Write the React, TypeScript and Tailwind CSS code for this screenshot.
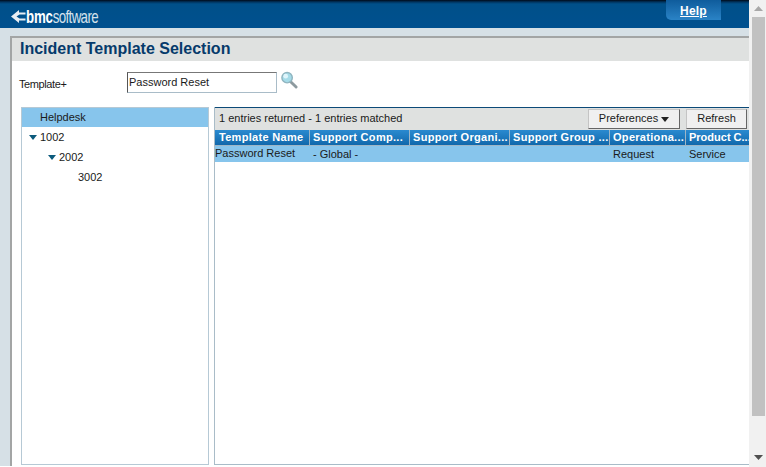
import React from "react";

const columns = [
  { label: "Template Name", width: "w-[95px]", value: "Password Reset", cell: "pl-0 -translate-y-px" },
  { label: "Support Comp...", width: "w-[100px]", value: "- Global -", cell: "pl-[3px]" },
  { label: "Support Organi...", width: "w-[100px]", value: "", cell: "pl-[3px]" },
  { label: "Support Group ...", width: "w-[100px]", value: "", cell: "pl-[3px]" },
  { label: "Operationa...", width: "w-[76px]", value: "Request", cell: "pl-[3px]" },
  { label: "Product C...", width: "w-[63px]", value: "Service", cell: "pl-[3px]" },
];

const Caret = ({ className }: { className: string }) => (
  <svg width="8" height="5" viewBox="0 0 8 5" className={className}>
    <path d="M0 0h8L4 5z" fill="currentColor" />
  </svg>
);

const App: React.FC = () => {
  return (
    <div className="flex h-[467px] w-[766px] overflow-hidden bg-[#d6e0e6] font-['Liberation_Sans',Arial,sans-serif] text-[11px] text-[#1a1a1a]">
      <div className="flex w-[749px] flex-col">
        {/* top banner */}
        <div className="flex h-[28px] shrink-0 items-start justify-between bg-[linear-gradient(#000a18_0px,#00345f_2px,#005089_4px,#00508f_100%)]">
          <div className="ml-[11px] mt-[5px] flex h-[23px] items-center text-white">
            <svg width="15" height="15" viewBox="0 0 15 15" className="shrink-0">
              <path d="M8 1 0 7.500 8 14v-2.500h6.500v-2H8.500L5.500 7.500l3-2h6v-2H8z" fill="#e8eef4" />
            </svg>
            <span className="origin-left scale-x-[0.7] whitespace-nowrap text-[19px] leading-none">
              <span className="font-bold tracking-[-0.3px]">bmc</span>
              <span className="tracking-[-0.9px] text-[#d5e2ec]">software</span>
            </span>
          </div>
          <div className="mr-[28px] flex h-[20px] w-[55px] items-center justify-center rounded-bl-[5px] bg-[linear-gradient(#0f5c9c,#2a83c6)] pt-[1px] text-[12px] font-bold tracking-[0.2px] text-white underline">
            Help
          </div>
        </div>

        {/* page panel */}
        <div className="ml-[10px] mt-[8px] flex flex-1 flex-col border-l-2 border-t-2 border-[#a3a5a5] bg-white">
          <div className="flex h-[23px] shrink-0 items-center bg-[#dfe1e0] pb-[2px] pl-[8px] text-[16px] font-bold text-[#063a6b]">
            Incident Template Selection
          </div>

          <div className="mt-[11px] flex h-[21px] shrink-0 items-center pl-[7px]">
            <span className="w-[108px] pt-[4px] tracking-[-0.4px]">Template+</span>
            <div className="flex h-[21px] w-[150px] items-center border border-[#a9bcc8] border-l-[#555] border-t-[#777] pl-[1px] text-[11px]">
              Password Reset
            </div>
            <svg width="18" height="18" viewBox="0 0 19 19" className="ml-[3px] -translate-y-[3px]">
              <path d="M11 11l6 6" stroke="#8d9a9f" strokeWidth="3" strokeLinecap="round" />
              <circle cx="7.500" cy="7" r="5.500" fill="#a5dbe8" stroke="#8fb4bf" strokeWidth="1.500" />
              <circle cx="6" cy="5.500" r="2.500" fill="#dff5fb" />
            </svg>
          </div>

          <div className="mb-[1px] mt-[14px] flex min-h-0 flex-1 pl-[9px]">
            {/* tree */}
            <div className="w-[188px] shrink-0 border border-[#b6c9d5]">
              <div className="flex h-[19px] items-center bg-[#87c5ec] pl-[18px]">Helpdesk</div>
              <div className="flex h-[20px] items-center pl-[7px]">
                <Caret className="mr-[3px] text-[#0c5a7c]" />
                1002
              </div>
              <div className="flex h-[20px] items-center pl-[26px]">
                <Caret className="mr-[3px] text-[#0c5a7c]" />
                2002
              </div>
              <div className="flex h-[20px] items-center pl-[56px]">3002</div>
            </div>

            {/* results table */}
            <div className="ml-[5px] flex min-w-0 flex-1 flex-col overflow-hidden border-b border-l border-[#a9bcc8]">
              <div className="h-px shrink-0 bg-[#0c4a78]" />
              <div className="flex h-[22px] shrink-0 items-center bg-[#dfe1e0] pl-[4px]">
                <span className="pb-px">1 entries returned - 1 entries matched</span>
                <button className="mb-px ml-auto flex h-[20px] w-[92px] items-center justify-center border border-[#c4c4c4] border-b-[#666] border-r-[#666] bg-[#f0f0f0]">
                  Preferences
                  <Caret className="ml-[3px] mt-[2px] text-[#222]" />
                </button>
                <button className="mb-px ml-[6px] mr-[2px] h-[20px] w-[61px] border border-[#c4c4c4] border-b-[#666] border-r-[#666] bg-[#f0f0f0]">
                  Refresh
                </button>
              </div>
              <div className="flex h-[15px] shrink-0 bg-[linear-gradient(#2a8ad0,#1168ab)] text-[11px] font-bold tracking-[0.3px] text-white">
                {columns.map((c) => (
                  <div
                    key={c.label}
                    className={`${c.width} shrink-0 whitespace-nowrap border-r border-[#9fb6c6] pl-[3px] leading-[15px] first:pl-[4px] last:border-r-0 last:tracking-[0px]`}
                  >
                    {c.label}
                  </div>
                ))}
              </div>
              <div className="flex h-[17px] shrink-0 border-t border-[#9fb6c6] bg-[#87c5ec]">
                {columns.map((c) => (
                  <div key={c.label} className={`${c.width} ${c.cell} shrink-0 whitespace-nowrap leading-[16px]`}>
                    {c.value}
                  </div>
                ))}
              </div>
            </div>
          </div>
        </div>
        <div className="h-px shrink-0 bg-white" />
      </div>

      {/* page scrollbar */}
      <div className="flex w-[17px] flex-col items-center bg-[#f1f1f1] pl-[1px]">
        <div className="flex h-[17px] shrink-0 items-center justify-center">
          <svg width="9" height="5" viewBox="0 0 9 5">
            <path d="M0 5h9L4.500 0z" fill="#a8a8a8" />
          </svg>
        </div>
        <div className="h-[399px] w-[13px] shrink-0 bg-[#c1c1c1]" />
        <div className="mt-auto flex h-[17px] items-center justify-center pb-[2px]">
          <svg width="9" height="5" viewBox="0 0 9 5">
            <path d="M0 0h9L4.500 5z" fill="#505050" />
          </svg>
        </div>
      </div>
    </div>
  );
};

export default App;
